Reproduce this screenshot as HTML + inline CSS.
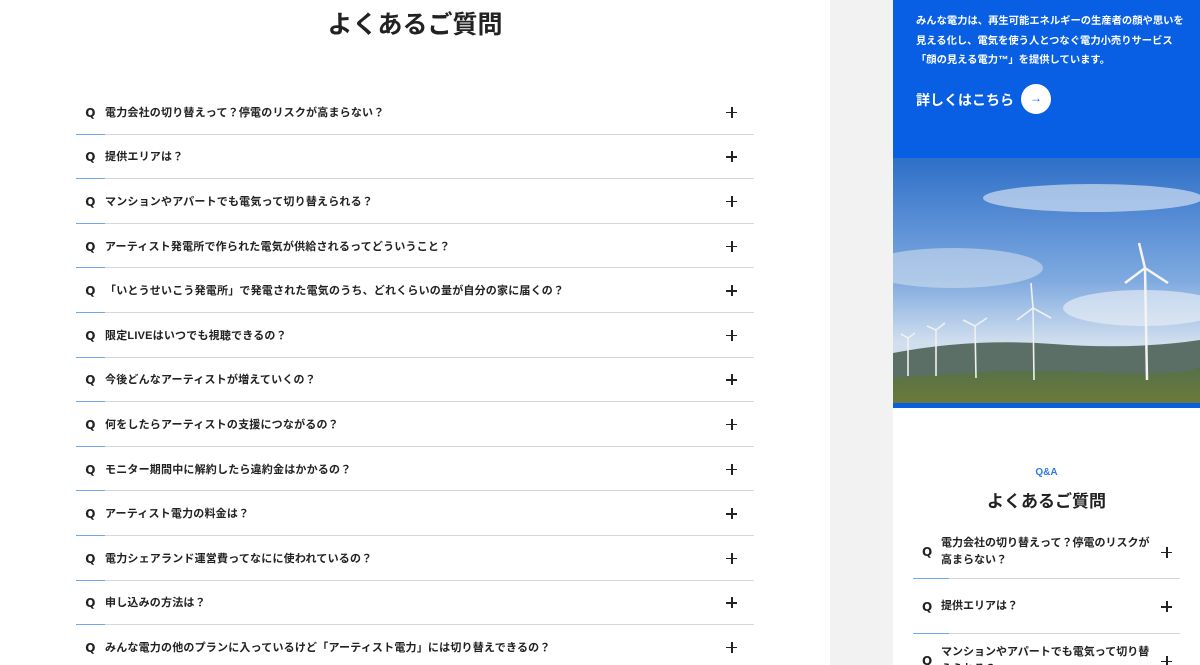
<!DOCTYPE html>
<html><head><meta charset="utf-8"><style>
*{margin:0;padding:0;box-sizing:border-box}
body{width:1200px;height:665px;overflow:hidden;background:#fff;font-family:"Liberation Sans","Noto Sans CJK JP",sans-serif;color:#222;position:relative}
.left{position:absolute;left:0;top:0;width:830px;height:665px;background:#fff;overflow:hidden}
.gray{position:absolute;left:830px;top:0;width:63px;height:665px;background:#f2f2f2}
h1{position:absolute;left:0;width:830px;top:5px;text-align:center;font-size:25px;font-weight:bold}
.row{position:absolute;left:76px;width:678px;height:44.6px;border-bottom:1px solid #d4d7dc;display:flex;align-items:center;font-size:11px;font-weight:bold;letter-spacing:.2px}
.row:after{content:"";position:absolute;left:0;bottom:-1px;width:29px;height:1px;background:#6fa8f0}
.q{width:29px;text-align:center;font-size:12px;font-weight:bold;font-family:"DejaVu Sans",sans-serif;position:relative;top:1px}
.p{position:absolute;right:17px;top:50%;width:11px;height:11px;margin-top:-5px}
.p:before,.p:after{content:"";position:absolute;background:#222}
.p:before{left:0;top:5px;width:11px;height:1.5px}
.p:after{left:5px;top:0;width:1.5px;height:11px}
.right{position:absolute;left:893px;top:0;width:307px;height:665px;background:#fff;overflow:hidden}
.blue{position:absolute;left:0;top:0;width:307px;height:158px;background:#085fe3;color:#fff}
.blue p{position:absolute;left:23px;top:12px;width:272px;font-size:10.3px;line-height:19.5px;font-weight:bold;letter-spacing:0}
.more{position:absolute;left:23px;top:90px;font-size:14px;font-weight:bold}
.circ{position:absolute;left:128px;top:84px;width:30px;height:30px;border-radius:50%;background:#fff;color:#085fe3;text-align:center;line-height:29px;font-size:12px}
.rq{position:absolute;left:20px;width:267px;border-bottom:1px solid #d4d7dc;display:flex;align-items:center;font-size:11px;font-weight:bold;line-height:17px}
.rq:after{content:"";position:absolute;left:0;bottom:-1px;width:36px;height:1px;background:#6fa8f0}
.rq .q{width:28px;text-align:left;padding-left:9px;font-size:12px}
.rq .t{width:212px}
.rq .p{right:8px}
</style></head><body>
<div class="left">
<h1>よくあるご質問</h1>
<div class="row" style="top:90px"><span class="q">Q</span>電力会社の切り替えって？停電のリスクが高まらない？<i class="p"></i></div>
<div class="row" style="top:134.6px"><span class="q">Q</span>提供エリアは？<i class="p"></i></div>
<div class="row" style="top:179.2px"><span class="q">Q</span>マンションやアパートでも電気って切り替えられる？<i class="p"></i></div>
<div class="row" style="top:223.8px"><span class="q">Q</span>アーティスト発電所で作られた電気が供給されるってどういうこと？<i class="p"></i></div>
<div class="row" style="top:268.4px"><span class="q">Q</span>「いとうせいこう発電所」で発電された電気のうち、どれくらいの量が自分の家に届くの？<i class="p"></i></div>
<div class="row" style="top:313px"><span class="q">Q</span>限定LIVEはいつでも視聴できるの？<i class="p"></i></div>
<div class="row" style="top:357.6px"><span class="q">Q</span>今後どんなアーティストが増えていくの？<i class="p"></i></div>
<div class="row" style="top:402.2px"><span class="q">Q</span>何をしたらアーティストの支援につながるの？<i class="p"></i></div>
<div class="row" style="top:446.8px"><span class="q">Q</span>モニター期間中に解約したら違約金はかかるの？<i class="p"></i></div>
<div class="row" style="top:491.4px"><span class="q">Q</span>アーティスト電力の料金は？<i class="p"></i></div>
<div class="row" style="top:536px"><span class="q">Q</span>電力シェアランド運営費ってなにに使われているの？<i class="p"></i></div>
<div class="row" style="top:580.6px"><span class="q">Q</span>申し込みの方法は？<i class="p"></i></div>
<div class="row" style="top:625.2px"><span class="q">Q</span>みんな電力の他のプランに入っているけど「アーティスト電力」には切り替えできるの？<i class="p"></i></div>
</div>
<div class="gray"></div>
<div class="right">
<div class="blue"><p>みんな電力は、再生可能エネルギーの生産者の顔や思いを見える化し、電気を使う人とつなぐ電力小売りサービス「顔の見える電力™」を提供しています。</p>
<div class="more">詳しくはこちら</div><div class="circ">→</div></div>
<svg style="position:absolute;left:0;top:158px" width="307" height="250" viewBox="0 0 307 250">
<defs><linearGradient id="s" x1="0" y1="0" x2="0" y2="1"><stop offset="0" stop-color="#2f6fc8"/><stop offset=".5" stop-color="#7faae0"/><stop offset=".75" stop-color="#d0deee"/></linearGradient>
<linearGradient id="g" x1="0" y1="0" x2="0" y2="1"><stop offset="0" stop-color="#55704a"/><stop offset="1" stop-color="#6b7a3a"/></linearGradient></defs>
<rect width="307" height="245" fill="url(#s)"/>
<ellipse cx="200" cy="40" rx="110" ry="14" fill="#e8eef6" opacity=".6"/>
<ellipse cx="60" cy="110" rx="90" ry="20" fill="#dfe8f2" opacity=".5"/>
<ellipse cx="250" cy="150" rx="80" ry="18" fill="#eef2f6" opacity=".6"/>
<path d="M0 195 Q80 180 160 186 T307 182 L307 245 L0 245Z" fill="#5b6f66"/>
<path d="M0 220 Q100 210 200 214 T307 208 L307 245 L0 245Z" fill="url(#g)"/>
<g stroke="#f4f4f4" stroke-width="2.5" fill="none">
<line x1="252" y1="110" x2="254" y2="222"/><line x1="252" y1="110" x2="246" y2="85"/><line x1="252" y1="110" x2="275" y2="125"/><line x1="252" y1="110" x2="232" y2="125"/>
</g>
<g stroke="#f0f0f0" stroke-width="1.6" fill="none">
<line x1="140" y1="150" x2="141" y2="222"/><line x1="140" y1="150" x2="138" y2="125"/><line x1="140" y1="150" x2="158" y2="160"/><line x1="140" y1="150" x2="124" y2="162"/>
<line x1="82" y1="168" x2="83" y2="220"/><line x1="82" y1="168" x2="94" y2="160"/><line x1="82" y1="168" x2="70" y2="162"/>
<line x1="43" y1="172" x2="43" y2="218"/><line x1="43" y1="172" x2="52" y2="165"/><line x1="43" y1="172" x2="34" y2="168"/>
<line x1="15" y1="180" x2="15" y2="218"/><line x1="15" y1="180" x2="22" y2="175"/><line x1="15" y1="180" x2="8" y2="176"/>
</g>
<rect y="245" width="307" height="5" fill="#085fe3"/>
</svg>
<div style="position:absolute;left:0;width:307px;top:467px;text-align:center;color:#2e7be8;font-size:10px;font-weight:bold">Q&amp;A</div>
<div style="position:absolute;left:0;width:307px;top:487px;text-align:center;font-size:17px;font-weight:bold">よくあるご質問</div>
<div class="rq" style="top:525px;height:54px"><span class="q">Q</span><span class="t">電力会社の切り替えって？停電のリスクが高まらない？</span><i class="p"></i></div>
<div class="rq" style="top:579px;height:55px"><span class="q">Q</span><span class="t">提供エリアは？</span><i class="p"></i></div>
<div class="rq" style="top:634px;height:54px"><span class="q">Q</span><span class="t">マンションやアパートでも電気って切り替えられる？</span><i class="p"></i></div>
</div>
</body></html>
